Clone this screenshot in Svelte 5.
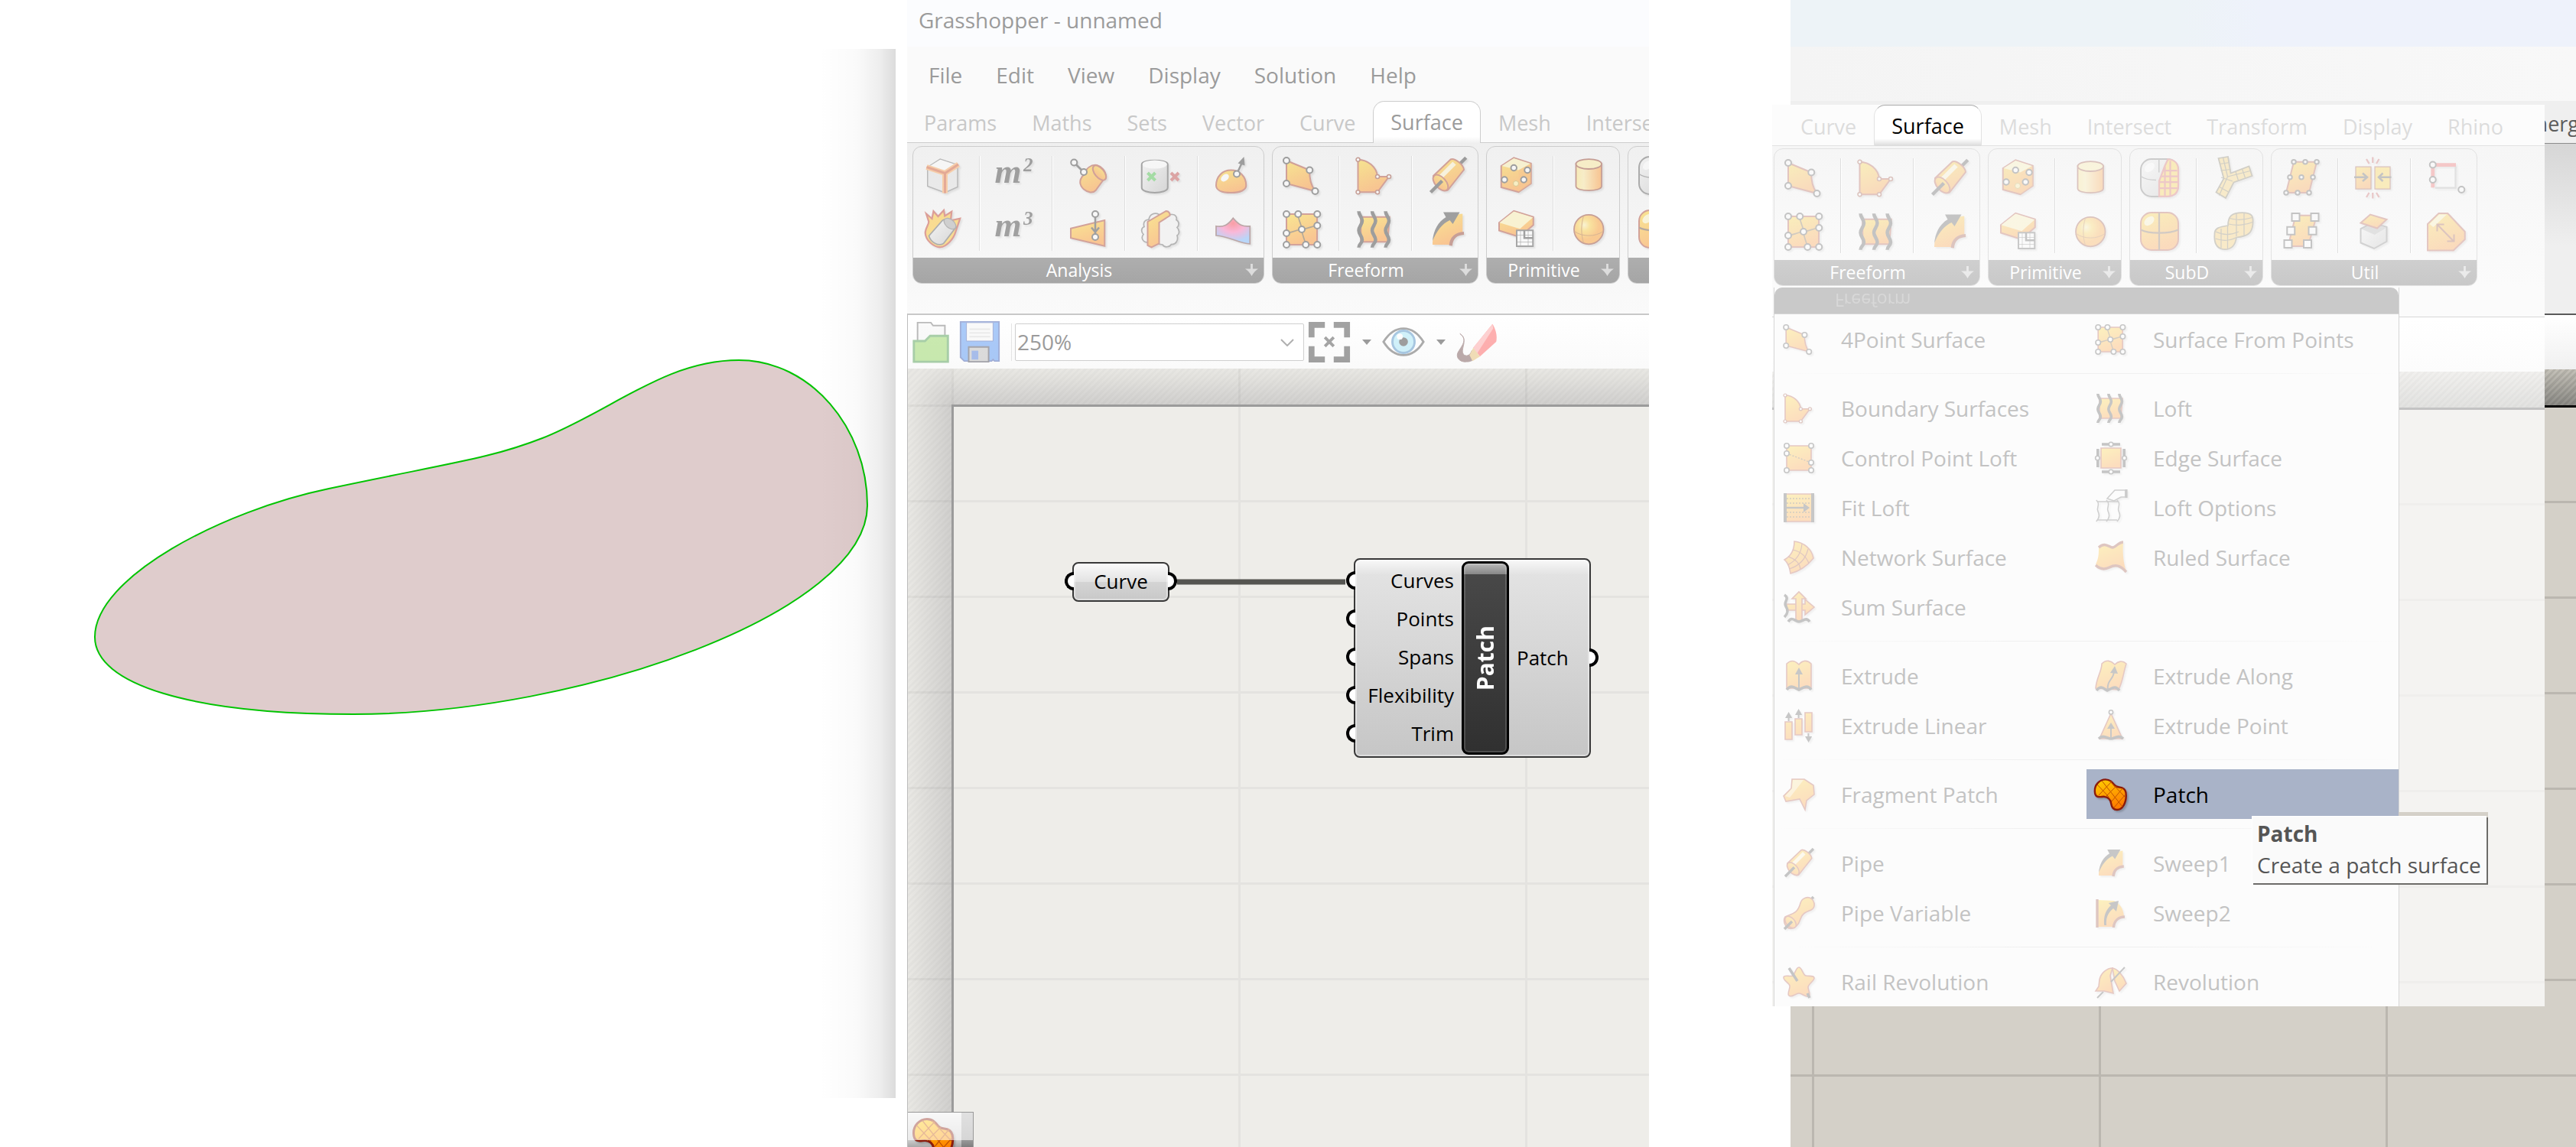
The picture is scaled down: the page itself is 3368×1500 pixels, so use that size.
<script lang="ts">
  interface Panel {
    name: string;
    icons: string[];
  }
  interface MenuItem {
    label: string;
    icon: string;
    tip?: string;
  }

  const node = (x: number, y: number, r = 1.6) =>
    `<circle class="node" cx="${x}" cy="${y}" r="${r}"/>`;
  const nodes = (list: number[][], r = 1.6) => list.map(([x, y]) => node(x, y, r)).join('');
  const square = (x: number, y: number) =>
    `<rect class="node" x="${x - 2}" y="${y - 2}" width="4" height="4"/>`;
  const wave = (x: number, y = 2.5) => `M${x} ${y}c0 2 1.8 3 1.8 5s-1.8 3-1.8 5 1.8 3 1.8 5-1.8 2-1.8 4`;

  // 24 x 24 glyphs
  const icons: Record<string, string> = {
    boxCorners: `<path fill="#ddd" stroke="#666" stroke-width=".6" d="M3.9 7.5l6.6-4.3 9.1 3v11.6L13 20.8l-9.1-3.4z"/><path fill="#fff" d="M4 7.5l6.5-4 9.2 3-6.7 4z"/><path class="glow" d="M3.4 7.4l9.6 3.2 7-4.6M13 10.6V21"/><path class="ember" d="M3.4 7.4l9.6 3.2 7-4.6M13 10.6V21"/>`,
    deconstruct: `<path class="hot" stroke-width=".9" d="M3.2 3.8l3 2.6.8-3.9 2.4 2.7 3-3.2.5 3 3.6-2.3-.5 4.6 4.9-1-2.4 7.2c-1 3.4-4.6 7.6-8 7.8-3.2 0-7.6-3.4-7.8-7.4 0-2.6 2-4.6 1.8-6z"/><path fill="url(#steel)" stroke="#444" stroke-width=".7" d="M4.6 15.4l7.2-8.2c2.6-1.4 6.4 1 7 3.6l-6.6 8.6c-2.6 1.6-6.6-.6-7.600-4z"/><ellipse cx="15.6" cy="9" rx="3.6" ry="2.2" transform="rotate(40 15.6 9)" fill="#999" stroke="#555" stroke-width=".5"/>`,
    area: `<text class="serif" x="1" y="15.6" font-size="18">m</text><text class="serif" x="16" y="9.4" font-size="10">2</text>`,
    volume: `<text class="serif" x="1" y="15.6" font-size="18">m</text><text class="serif" x="16" y="9.4" font-size="10">3</text>`,
    closest: `<path class="warm" d="M9.4 11.6c1.4-3.6 4-5.6 7-5.2 2.4.6 4.6 3 4.8 5.8l-5.4 7.4c-1.4 1.6-4 1.2-6.2-.6-2.2-2-2.8-4.6-.2-7.4z"/><ellipse class="warm" cx="17.8" cy="10.4" rx="4.6" ry="2.4" transform="rotate(50 17.8 10.4)"/><path class="ink" d="M4.5 5l5 5"/>${nodes([[4.5, 5], [9.6, 10]])}`,
    evaluate: `<path class="warm" d="M2.8 11.5l17.7-4.3v13.5L2.8 16.5z"/><path class="ink" d="M15.6 4v12M13.6 11l2 2.4 2-2.4"/>${nodes([[15.6, 4], [15.6, 16]])}`,
    inside: `<path fill="url(#steel)" stroke="#333" stroke-width=".8" d="M1.9 6v12.2c0 3.4 13.6 3.4 13.6 0V6c0-2.8-13.6-2.8-13.6 0z"/><ellipse cx="8.7" cy="6" rx="6.4" ry="2.2" fill="#fff"/><path stroke="#3b3" stroke-width="1.6" d="M5 10.4l4 4m0-4l-4 4"/><path stroke="#b33" stroke-width="1.6" d="M17.2 10.4l4 4m0-4l-4 4"/>`,
    brepShape: `<path fill="#eee" stroke="#555" stroke-width=".7" d="M5.2 18.8c-3 0-3.8-2.6-2.4-4.2-1.4-1.4-1.2-3.4.4-4-.8-2.2.6-4 2.4-3.6C6 4 8.6 3 11 4.2h7c1.8 0 2.4 1.8 2 2.8 1.6.8 1.6 3 .4 4 1.4 1.4 1.4 3.2 0 4.2.8 2.4-.6 4.8-3 4.6-1 1.6-3.6 1.8-4.6.2z"/><path class="warm" d="M5 8l9.6-5.6c1.6 0 2.2 1.4 2 2.4L11 8.4v11L7 21.4l-2-1z"/>`,
    principal: `<path class="warm" d="M2.8 17c0-4.6 3.2-8 7.8-8s7.9 3.4 7.9 8c0 2.4-3 3.8-7.9 3.8s-7.8-1.4-7.8-3.8z"/><ellipse cx="7.4" cy="13" rx="2.4" ry="1.6" transform="rotate(-40 7.4 13)" fill="#fff"/><path class="ink" d="M13.6 11l2.8-6"/><path fill="#222" d="M14.2 5.4l3.2-3.4.4 4.6z"/>${node(13.6, 11)}`,
    curvature: `<path fill="url(#heat)" stroke="#633" stroke-width=".7" d="M2.8 10.3c4 .6 6.2-.6 8.9-4.2 3 3.6 5 4.6 8.8 4.2v9.3c-6-.4-11-4-17.7-4.4z"/>`,
    point4: `<path class="warm" d="M3.6 4l12.1 5c-.2 4 .8 8 2.9 11l-15-4z"/>${nodes([[3.6, 4], [15.7, 9], [3.6, 16], [18.6, 20]])}`,
    points: `<path class="warm" d="M3.6 4h16v16h-16z"/><path class="thin" d="M9.7 4c0 4 1.6 4 1.9 8s1.6 5 2.1 8M3.6 14c3-.4 4-1.4 8-2s5-1.6 8-2"/>${nodes([[3.6, 4], [9.7, 4], [19.7, 4], [19.7, 10], [11.6, 12], [3.6, 14], [3.6, 20], [13.7, 20], [19.7, 20]])}`,
    boundary: `<path class="warm" d="M3 3.5c5 0 9.8 3.8 10.2 8.9h6l-6 8.1H3z"/><g class="rust">${nodes([[3, 3.5], [13.2, 12.4], [19.2, 12.4], [13.2, 20.5], [3, 20.5]], 1)}</g>`,
    loft: `<path class="warm" d="M4.5 5.5h15l-1 13h-14z"/><path class="heavy" d="${wave(3.4)}${wave(10.4)}${wave(17.4)}"/>`,
    pipe: `<path class="heavy" d="M18 6l3.5-3.5"/><path class="warm" d="M4.4 12l9-8.6c2-1 6.8 2.6 7 5.4L12 19.4c-2 1.6-8-2.8-7.6-7.4z"/><path stroke="#fff3c0" stroke-width="2.4" d="M8.4 12.4l7-7"/><ellipse class="warm" cx="8.2" cy="15.6" rx="5" ry="2.8" transform="rotate(48 8.2 15.6)"/><path class="heavy" d="M3 20.6l6-6"/>`,
    sweep1: `<path fill="url(#warm)" d="M4 20C4 12 9 5.500 15 4.500l4.700-.7V14c-3.600.6-6 3-6.200 6z"/><path fill="#222" d="M4 18C4.600 12 7 8 11 5.600L9.600 3h8.600l-3.600 6.200-1.600-2C9 9 6 13 4 18z"/><path class="rustline" d="M20.4 14c-4 .2-6.6 2.6-6.9 6.5"/>`,
    cheese: `<path class="warm" d="M3.9 6.8l6.6-4.3 9 3V16L13 20.500 3.900 18z"/><path fill="#fff0a0" d="M4.200 6.800l6.300-4 8.700 2.800L13 9z"/><path fill="#f80" opacity=".5" d="M13 9l6.500-3.500V16L13 20.500z"/>${nodes([[10.5, 7.8], [17.6, 9], [5.6, 14], [15.7, 14]], 1.5)}<circle cx="11.6" cy="16" r="1.4" fill="#ffe680" stroke="#a80" stroke-width=".4"/>`,
    plane: `<path class="warm" d="M2.8 8.5l7.7-6.2 10.2 3.2v4.200L13.500 16 2.800 12.600z"/><path fill="#fff0a0" d="M3 8.500l7.500-5.900 10 3.100-6.800 6z"/><path fill="#fff" stroke="#333" stroke-width=".8" d="M12 12.500h8.500v8.300H12z"/><path stroke="#333" stroke-width=".25" d="M14 12.500v8.300M18 12.500v8.300M12 15h8.500M12 18.600h8.500"/><path class="ink" d="M16 12.500v4h4.500"/>`,
    cylinder: `<path fill="url(#side)" stroke="#83200a" stroke-width=".7" d="M5 5.600v11.800c0 3 13.400 3 13.400 0V5.600z"/><ellipse cx="11.7" cy="5.8" rx="6.7" ry="2.6" fill="#ffe98a" stroke="#83200a" stroke-width=".7"/>`,
    sphere: `<circle cx="11.7" cy="12" r="7.7" fill="url(#ball)" stroke="#83200a" stroke-width=".7"/><path stroke="#a50" stroke-width=".4" d="M9 5c-1.400 4-1.400 10 0 14M4.200 13c4 3 11 3 15 0"/>`,
    subdMesh: `<rect x="2" y="2" width="19.6" height="19.6" rx="5.6" fill="url(#steel)" stroke="#444" stroke-width=".8"/><path stroke="#555" stroke-width=".6" d="M2 11c2 1.500 5 2 8 2M11.500 2v7"/><path fill="#ffc300" stroke="#c33" stroke-width=".9" d="M11.600 21.500v-8l3-8 1.600-3.400c3.600.2 5.400 2.400 5.400 5.600v8c0 4-2 5.800-5.600 5.800z"/><path stroke="#c33" stroke-width=".9" d="M14.600 6v15.500M17.400 3v18.500M12.600 11h9M11.600 14h10M11.600 17.200h10M14 8h7"/><ellipse cx="6.6" cy="6.4" rx="3" ry="2" transform="rotate(-40 6.6 6.4)" fill="#fff"/>`,
    subdBox: `<rect class="warm" x="2" y="2" width="19.6" height="19.6" rx="5.6"/><path stroke="#5a3a20" stroke-width=".9" d="M11.600 2v19.600M2 11c4 2.200 15 2.200 19.600 0"/><ellipse cx="6.4" cy="6.4" rx="3" ry="2" transform="rotate(-40 6.4 6.4)" fill="#fff3b0"/>`,
    multiPipe: `<path fill="#f5c23a" stroke="#5a5030" stroke-width=".7" d="M4.600 1.600l5-.8 1.400 8.600 9.600-3.600 1.600 5-9.600 3.400-4.200 8.200-5-3 4-7.200z"/><path stroke="#5a5030" stroke-width=".5" d="M5.200 4.600l5.200-.8M5.800 8l5.200-.6M6 11.600l6 2M13.600 8.600l1.400 4.600M17 7.200l1.600 4.600M5.200 16.600l4.600 2.600M7 1.200l2.400 10 11.800-3M9.400 11.200L5 21"/>`,
    fuse: `<path fill="#f5b830" stroke="#5a5030" stroke-width=".7" d="M2.600 13c0-2.600 2-3.600 7-4.200 0-5 2-6.800 7.400-6.800 5 0 6 1.600 5.600 6-.4 4.600-2.400 6.400-8.600 7-.6 4.400-3 6.600-7 6.200-3.600-.6-4.800-3.800-4.400-8.200z"/><path stroke="#5a5030" stroke-width=".5" d="M3 15.600c4 1.400 8 1 11-.6M3.200 12c4 2 8 1.800 12 0M10 8c4 1 9 .6 12.400-1M10.400 5c4 1.200 8 .8 11.800-.4M6 10.400v10M9.400 9v12M14 2.400v12M18 2.200v12"/>`,
    divide: `<path class="warm" d="M8 3.5h12L16 19.600H4z"/>${nodes([[8, 3.5], [14, 3.5], [20, 3.5], [6, 11.5], [12, 11.5], [18, 11.5], [4, 19.6], [10, 19.6], [16, 19.6]], 1.1)}`,
    isotrim: `<path class="warm" d="M9 3.5h11L15.500 19.600H5z"/>${[[9, 4.4], [19, 4.4], [6.5, 11.5], [17.8, 11.5], [5, 18.4], [15.2, 18.4]].map(([x, y]) => square(x, y)).join('')}`,
    flip: `<path fill="url(#warm)" stroke="#83200a" stroke-width=".5" d="M2.400 6h8v11.600h-8z"/><path fill="#ffc300" stroke="#83200a" stroke-width=".5" d="M12.400 6h8v11.600h-8z"/><path class="ink" d="M1.600 11.500h6.600M6 9.400l2.400 2.100L6 13.600M21 11.500h-6.600M16.600 9.400l-2.200 2.100 2.200 2.100"/><path stroke="#b33" stroke-width=".9" d="M11.300 1v3M8 2l1.400 2.400M14.600 2l-1.400 2.400M11.300 19.600v3M8 22l1.400-2.400M14.600 22l-1.400-2.400"/>`,
    copyTrim: `<path fill="url(#steel)" stroke="#555" stroke-width=".8" d="M5 10.500l6-3 7.600 2v7.600L12 20.800l-7-3z"/><path fill="#999" d="M5.500 10.600l6-2.600 6.800 2-6 3.600z"/><path class="warm" d="M5 7.400l5-4.400 8.600 2.600-5 4.600z"/>`,
    retrim: `<path stroke="#999" stroke-width=".9" d="M16.600 6v11H6"/><path stroke="#e33" stroke-width="1.9" d="M16.800 5H4.700v11.900"/>${nodes([[4.7, 5], [4.7, 12.8], [19.7, 18]])}`,
    untrim: `<path class="warm" d="M2 8l5.800-5.600h4.700l9 9.600v4l-6 5.800H2z"/><path fill="#fff0a0" d="M3 8l5-5h4L5 9.600z"/><path stroke="#83200a" stroke-width=".8" d="M7.400 8.600l8 8.200M7 11.800V8.200h3.600M15.800 13.400V17h-3.600"/>`,
    cpLoft: `<path class="warm" d="M4 4h16v16H4z"/><path class="thin" stroke-dasharray="1 1" d="M4 9l16 6"/>${nodes([[4, 4], [20, 4], [4, 9], [20, 15], [4, 20], [20, 20]])}`,
    edge: `<path class="warm" d="M5.500 5.500h13v13h-13z"/><path class="heavy" d="M6 3h12M6 21h12M3.400 6v12M20.600 6v12"/>${nodes([[12, 3], [12, 21], [3.2, 12], [20.8, 12]], 1.4)}`,
    fitLoft: `<path class="warm" d="M3 3h18v18H3z"/><path class="thin" stroke-dasharray="1 1" d="M4 6h16M4 9h16M4 15h16M4 18h16"/><path fill="none" stroke="#222" stroke-width="2" d="M3 2.500v19M21 2.500v19"/><path fill="none" stroke="#222" stroke-width="1.2" d="M4 12h12"/><path fill="#222" d="M15 9l4 3-4 3z"/>`,
    loftOptions: `<path stroke="#444" stroke-width=".8" d="M2.400 7c3 3 0 4.500 1 7s1.500 4-1 7M9 7c3 3 0 4.500 1 7s1.500 4-1 7M16 7c3 3 0 4.500 1 7s1.500 4-1 7M3 8h14M3 20h13"/><path fill="#fff" stroke="#444" stroke-width=".8" d="M9.500 6l5-5.500h7V5h-3L14 7.500z"/><path stroke="#333" stroke-width="1.6" d="M22 0v5.500"/>`,
    network: `<path class="warm" d="M9 1.500c6 .5 11.500 5 12.500 11-4.500 5.500-9 8.500-15 10-.5-4-1.500-7-4-9C7 11 9 7 9 1.500z"/><path stroke="#83200a" stroke-width=".6" d="M14 3c-.5 6-3.500 11-9.500 14M18 6.500c-1.500 6-5.500 11-12.500 13M8 7c5 1 9 4.500 10.500 9M5 11.500c4.500 1.500 7.500 4.500 8 8"/>`,
    ruled: `<path fill="url(#warm)" d="M4 5.500C8 2 11 5 13 5.500S17.500 3 20 2c-.5 7 0 13 2 19-4-4-7-4.500-10-3-4 2-7 .5-10-1.500 2-4 2-7 2-11z"/><path class="rustline" d="M4 5.500C8 1.500 11 5.500 13 5.500S17 2 20 2M2 17c3 3 6 3 9 1.500 4-2 7-1.500 11 3"/>`,
    sum: `<path class="warm" d="M4 10h12V7l6 5-6 5v-3H4z"/><path class="warm" d="M10 21V6.500H7.500L12 2l4.500 4.500H14V21z"/><path class="heavy" d="M2.500 4c4 2.500-1 4.500 1 7.500s1 5-1 7M5 21.500c2.500-4 4.500 0 7 0s4.500-3.500 7 0"/>`,
    extrude: `<path class="warm" d="M4 4c2.500-2.500 5-2.500 8 .5 2.500-3 5.500-3 8-.5v16H4z"/><path class="heavy" d="M4 21c3-4 5.500-1 8 0 2.500-1 5.500-4 8 0"/><path class="ink" stroke-width="1.5" d="M12 20v-9"/><path fill="#222" d="M9.500 11L12 6.500l2.500 4.500z"/>`,
    extrudeAlong: `<path class="warm" d="M6 4c3-3 6-2 8.500.5 2-2 5-3 7.500-.5-2 6-2 11-5 17L2 20c.5-7 4-11 4-16z"/><path class="heavy" d="M2.500 21.500c3-4 5-1 7 0 3-1 5-4 8 0"/><path class="ink" d="M10 21c-1-6 4-7 4-12"/><path fill="#222" d="M11.500 10l3-4.500 2 5z"/>`,
    extrudeLinear: `<path class="warm" d="M3 9.500h4.500V21H3zM9.500 7.500H14V18H9.500zM16 3.500h4.500V16H16z"/><path class="ink" d="M5.300 9V6M11.800 7V4M18.200 17v3"/><path fill="#222" d="M3 7l2.300-4L7.600 7zM9.500 5l2.300-4 2.300 4zM16 19l2.300 4 2.300-4z"/>`,
    extrudePoint: `<path class="warm" d="M12 4l7.500 16.500h-15z"/><path class="heavy" d="M4 20.500c3-3 5.500 0 8 0s5-3 8 0"/><path class="ink" d="M12 20v-6"/><path fill="#222" d="M9.500 14l2.500-4 2.500 4z"/>${node(12, 3.2, 1.3)}`,
    fragment: `<path class="warm" d="M7.500 2h8l6 4L22 12l-5 4-1 6-3.500-7-9 1.500L2 13l5-5z"/><path fill="#fff" opacity=".5" d="M8 2.500h7L6 14l-3-1 4.500-5z"/>`,
    patch: `<path fill="url(#warm)" stroke="#8a1c0c" stroke-width="1.2" d="M1.400 9.800c-.2-4.200 3.200-7.600 7-7.600 3.200 0 4.600 2 5.800 3.600 1.400 1.600 3.200 1.200 5 1.800 2 .8 2.800 2.600 2.700 5.200-.1 4.800-2.300 9.200-5.900 9.200-2.800 0-3.600-2-3.900-4-.4-2.600-2-4.400-4.600-4.600-2-.2-5.900 1.800-6.100-3.600z"/><path stroke="#c05000" stroke-width=".5" d="M3 5.500l7.500 8M6 3l13.500 17M11 3l10.500 11M4 12.500l8.500-9M8.500 13.500l7-7M12.500 16.500l7.500-9M14 20.500l7.500-8.500"/>`,
    pipeVar: `<path class="heavy" d="M19 4l2.500-2.500"/><path class="warm" d="M13 5.500c1-3.500 5-4.500 7-3 2.500 2 3 6 0 7.500-4 1.500-6 2.500-7 6s-4 7-7.500 6c-3-1.500-4-5-2.500-7.500 4-2 8-1.500 10-9z"/><ellipse class="warm" cx="6.5" cy="18" rx="4.5" ry="2.8" transform="rotate(48 6.5 18)"/><path class="heavy" d="M2.500 22.500l5-5"/>`,
    sweep2: `<path fill="url(#warm)" d="M3.500 3.500L14 4c4 2 6 5 6.500 10-4 .5-6.500 3-7 7h-10z"/><path class="rustline" d="M3 3v18.500M21 14.500c-4 0-7 2.500-7.300 7"/><path fill="#222" d="M7.600 20c-.6-6 1-10 4.400-13l-1.600-1.500L17 4l-1.500 7-2-2C10 12 8.600 15 9 20z"/>`,
    railRev: `<path class="warm" d="M12 2.500c2 0 2.500 5 4.500 5.500s5.500-.5 5.500 1.500-4 4-4 6 2 5 .5 6-4.500-2-6.500-2-5 3-6.500 1.500 1-4.500.5-6.500-4.500-3.500-4-5.500 4.500 0 6-1 2-5.500 4-5.500z"/><path class="heavy" d="M5.500 3l5.500 8.500M17.500 19.500l1.500 3"/>`,
    revolution: `<path class="ink" d="M3 22.500l4-4"/><path class="warm" d="M4.500 10.500C5.500 6 9.500 3 13 3l-1.500 5 2 11.500-6-1.500H2l2-3z"/><path class="warm" d="M13 3c3 .5 7 4.500 9 10l-4.500 5-3-6.500z"/><path class="ink" d="M12 12L21 2.500"/>`,
  };

  const freeform = { name: 'Freeform', icons: ['point4', 'boundary', 'pipe', 'points', 'loft', 'sweep1'] };
  const primitive = { name: 'Primitive', icons: ['cheese', 'cylinder', 'plane', 'sphere'] };
  const subd = { name: 'SubD', icons: ['subdMesh', 'multiPipe', 'subdBox', 'fuse'] };

  const mainPanels: Panel[] = [
    {
      name: 'Analysis',
      icons: ['boxCorners', 'area', 'closest', 'inside', 'principal', 'deconstruct', 'volume', 'evaluate', 'brepShape', 'curvature'],
    },
    freeform,
    primitive,
    subd,
  ];
  const popupPanels: Panel[] = [
    freeform,
    primitive,
    subd,
    { name: 'Util', icons: ['divide', 'flip', 'retrim', 'isotrim', 'copyTrim', 'untrim'] },
  ];

  const menus = ['File', 'Edit', 'View', 'Display', 'Solution', 'Help'];
  const mainTabs = ['Params', 'Maths', 'Sets', 'Vector', 'Curve', 'Surface', 'Mesh', 'Intersect'];
  const popupTabs = ['Curve', 'Surface', 'Mesh', 'Intersect', 'Transform', 'Display', 'Rhino'];

  // Groups fill two columns, left to right.
  const groups: (MenuItem | null)[][] = [
    [{ label: '4Point Surface', icon: 'point4' }, { label: 'Surface From Points', icon: 'points' }],
    [
      { label: 'Boundary Surfaces', icon: 'boundary' }, { label: 'Loft', icon: 'loft' },
      { label: 'Control Point Loft', icon: 'cpLoft' }, { label: 'Edge Surface', icon: 'edge' },
      { label: 'Fit Loft', icon: 'fitLoft' }, { label: 'Loft Options', icon: 'loftOptions' },
      { label: 'Network Surface', icon: 'network' }, { label: 'Ruled Surface', icon: 'ruled' },
      { label: 'Sum Surface', icon: 'sum' }, null,
    ],
    [
      { label: 'Extrude', icon: 'extrude' }, { label: 'Extrude Along', icon: 'extrudeAlong' },
      { label: 'Extrude Linear', icon: 'extrudeLinear' }, { label: 'Extrude Point', icon: 'extrudePoint' },
    ],
    [{ label: 'Fragment Patch', icon: 'fragment' }, { label: 'Patch', icon: 'patch', tip: 'Create a patch surface' }],
    [
      { label: 'Pipe', icon: 'pipe' }, { label: 'Sweep1', icon: 'sweep1' },
      { label: 'Pipe Variable', icon: 'pipeVar' }, { label: 'Sweep2', icon: 'sweep2' },
    ],
    [{ label: 'Rail Revolution', icon: 'railRev' }, { label: 'Revolution', icon: 'revolution' }],
  ];

  const inputs = ['Curves', 'Points', 'Spans', 'Flexibility', 'Trim'];

  let activeTab = $state('Surface');
  let hovered = $state('Patch');
  let zoom = $state('250%');
</script>

{#snippet icon(name: string)}
  <svg class="icon" viewBox="0 0 24 24" fill="none" aria-hidden="true">{@html icons[name]}</svg>
{/snippet}

{#snippet tabs(list: string[])}
  <div class="tabs" role="tablist">
    {#each list as tab (tab)}
      <button class="tab" class:active={tab === activeTab} role="tab" aria-selected={tab === activeTab} onclick={() => (activeTab = tab)}>
        {tab}
      </button>
    {/each}
  </div>
{/snippet}

{#snippet ribbon(panels: Panel[])}
  <div class="ribbon">
    {#each panels as panel (panel.name)}
      <section class="panel">
        <div class="tools" style="grid-template-columns: repeat({panel.icons.length / 2}, 64px)">
          {#each panel.icons as name (name)}
            <button class="tool" aria-label={name}>{@render icon(name)}</button>
          {/each}
        </div>
        <button class="band">
          <span>{panel.name}</span>
          <svg class="more" viewBox="0 0 18 18" aria-hidden="true"><path d="M7.500 0h3v7H18q-5 3-9 10-4-7-9-10h7.500z" /></svg>
        </button>
      </section>
    {/each}
  </div>
{/snippet}

<svg class="defs" aria-hidden="true">
  <defs>
    <linearGradient id="warm" x1="0" y1="0" x2=".4" y2="1"><stop offset="0" stop-color="#ffd000" /><stop offset="1" stop-color="#ff7d00" /></linearGradient>
    <linearGradient id="side"><stop offset="0" stop-color="#ffe060" /><stop offset=".3" stop-color="#ffe58a" /><stop offset="1" stop-color="#ff7d00" /></linearGradient>
    <radialGradient id="ball" cx=".35" cy=".35"><stop offset="0" stop-color="#fff0a0" /><stop offset=".4" stop-color="#ffc820" /><stop offset="1" stop-color="#ff8a00" /></radialGradient>
    <linearGradient id="steel" x1="0" y1="0" x2="1" y2="1"><stop offset="0" stop-color="#f4f4f4" /><stop offset="1" stop-color="#aaa" /></linearGradient>
    <radialGradient id="heat" cx=".5" cy=".2" r=".7"><stop offset="0" stop-color="#ff2030" /><stop offset=".5" stop-color="#ff60b0" /><stop offset="1" stop-color="#60a8ff" /></radialGradient>
    <linearGradient id="shade" x1="0" y1="0" x2="1" y2="0"><stop offset="0" stop-color="#000" stop-opacity="0" /><stop offset=".5" stop-color="#000" stop-opacity=".02" /><stop offset=".8" stop-color="#000" stop-opacity=".07" /><stop offset="1" stop-color="#000" stop-opacity=".14" /></linearGradient>
  </defs>
</svg>

<main class="page">
  <section class="viewport" aria-label="Patch preview">
    <svg viewBox="0 0 1186 1500">
      <path
        class="patch-shape"
        d="M966 471C1060 471 1134 560 1134 661C1134 800 760 934 462 934C250 934 124 895 124 833C124 755 290 668 430 639C590 605 640 600 709 573C800 537 870 471 966 471z"
      />
      <rect x="1070" y="64" width="101" height="1372" fill="url(#shade)" />
    </svg>
  </section>

  <section class="editor">
    <header class="title">Grasshopper - unnamed</header>
    <nav class="menubar">
      {#each menus as name (name)}
        <button>{name}</button>
      {/each}
    </nav>
    {@render tabs(mainTabs)}
    {@render ribbon(mainPanels)}

    <div class="toolbar">
      <button class="big" aria-label="Open">
        <svg viewBox="0 0 60 60" fill="none">
          <path fill="#f2f2f2" stroke="#555" stroke-width="2" d="M10 44V4h18l3 4h16v36z" />
          <path fill="#7ccc3c" stroke="#2c8a2c" stroke-width="3" d="M5 57V29h15l7-7h24v35z" />
        </svg>
      </button>
      <button class="big" aria-label="Save">
        <svg viewBox="0 0 60 60" fill="none">
          <path fill="#2f7df0" stroke="#1c3da0" stroke-width="2" d="M4 3h52v53h-6l-2-2-2 2H9l-5-5z" />
          <path fill="#f4f4f4" stroke="#1c3da0" d="M12 4h36v25H12z" />
          <path stroke="#ccc" stroke-width="2" d="M16 13h28M16 18h28M16 23h28" />
          <path fill="#aaa" stroke="#223" stroke-width="2" d="M15 37h27v20H15z" />
          <path fill="#2a60d0" d="M19 42h9v12h-9z" />
        </svg>
      </button>
      <label class="zoom">
        <select bind:value={zoom} aria-label="Zoom level">
          <option>250%</option>
          <option>100%</option>
        </select>
        <svg viewBox="0 0 18 10" aria-hidden="true"><path d="M1 1l8 8 8-8" /></svg>
      </label>
      <button class="big" aria-label="Zoom extents">
        <svg viewBox="0 0 60 60" fill="none">
          <path stroke="#1a1a1a" stroke-width="8" d="M6 24V7h18M36 7h18v17M54 36v18H36M24 54H6V36" />
          <path stroke="#222" stroke-width="4" d="M24 24l12 12M36 24L24 36" />
        </svg>
      </button>
      <span class="caret"></span>
      <button class="big" aria-label="Preview">
        <svg viewBox="0 0 60 60" fill="none">
          <path fill="#fff" stroke="#333" stroke-width="3" d="M3 30C18 6 42 6 57 30 42 54 18 54 3 30z" />
          <circle cx="30" cy="30" r="15" fill="#8fe0f5" stroke="#2a78b8" stroke-width="3" />
          <circle cx="30" cy="30" r="6" fill="#111" />
          <circle cx="25" cy="23" r="4" fill="#fff" />
        </svg>
      </button>
      <span class="caret"></span>
      <button class="big" aria-label="Sketch">
        <svg viewBox="0 0 60 60" fill="none">
          <path fill="#5a3030" stroke="#5a3030" stroke-width="1" d="M6 19c12 8 1 18-3 26-3 8 5 13 12 12 8 0 12-4 14-12l-7-3c-2 6-6 8-10 6-8-6 7-20-6-29z" />
          <path fill="#ff3c3c" d="M24 38L50 6c4 6 7 16 5 24L33 50z" />
          <path fill="#ff9090" d="M24 38L50 6l1 6-22 34z" />
          <path fill="#e0b050" d="M24 38l9 12-10 6-4-8z" />
        </svg>
      </button>
    </div>

    <div class="canvas">
      <div class="corner"></div>
      <div class="rail top"></div>
      <div class="rail left"></div>
      <div class="sheet"></div>

      <svg class="wire" width="220" height="8" aria-hidden="true"><path d="M0 4h220" /></svg>
      <div class="node param">
        <i class="grip in"></i>Curve<i class="grip out"></i>
      </div>
      <div class="node component">
        <ul class="ports">
          {#each inputs as name (name)}
            <li><i class="grip in"></i>{name}</li>
          {/each}
        </ul>
        <div class="nameplate"><span>Patch</span></div>
        <div class="result">Patch<i class="grip out"></i></div>
      </div>
      <div class="widget">{@render icon('patch')}</div>
    </div>
  </section>

  <section class="backdrop">
    <div class="bd-title"></div>
    <div class="bd-menu"></div>
    <div class="bd-tabs"><span>nerg</span></div>
    <div class="bd-ribbon"></div>
    <div class="bd-toolbar"></div>
    <div class="bd-hatch"></div>
    <div class="bd-sheet"></div>

    <div class="popup">
      {@render tabs(popupTabs)}
      {@render ribbon(popupPanels)}
      <div class="stack">
        <div class="behind">
          <div class="gap"></div>
          <div class="strip"></div>
          <div class="rail top"></div>
          <div class="sheet"></div>
        </div>
        <div class="dropdown">
          <div class="mirror"><span aria-hidden="true">Freeform</span></div>
          <div class="items" role="menu">
            {#each groups as group, g (g)}
              <div class="group">
                {#each group as item, i (i)}
                  {#if item}
                    <div class="slot">
                      <button
                        class="item"
                        class:hot={item.label === hovered}
                        role="menuitem"
                        onmouseenter={() => (hovered = item.label)}
                      >
                        {@render icon(item.icon)}
                        <span>{item.label}</span>
                      </button>
                      {#if item.tip && item.label === hovered}
                        <div class="tip" role="tooltip">
                          <div class="tip-body">
                            <strong>{item.label}</strong>
                            <span>{item.tip}</span>
                          </div>
                        </div>
                      {/if}
                    </div>
                  {/if}
                {/each}
              </div>
            {/each}
          </div>
        </div>
      </div>
    </div>
  </section>
</main>

<style>
  :global(body) {
    background: #fff;
  }
  button {
    padding: 0;
    border: 0;
    background: none;
    color: inherit;
    font: inherit;
    text-align: left;
  }
  .defs {
    position: absolute;
    width: 0;
    height: 0;
  }
  .page {
    display: grid;
    grid-template-columns: 1186fr 970fr 1212fr;
    min-height: 100vh;
    overflow: hidden;
    font-family: 'Open Sans', 'Noto Sans', sans-serif;
    font-size: 28px;
    line-height: 38px;
    white-space: nowrap;
  }

  .viewport svg {
    display: block;
    width: 100%;
  }
  .patch-shape {
    fill: #dfcccc;
    stroke: #00c400;
    stroke-width: 2;
  }

  /* icons */
  .icon {
    display: block;
    overflow: visible;
    opacity: var(--fade);
    filter: drop-shadow(2px 2px 1px rgba(0, 0, 0, 0.2));
  }
  .icon :global(.warm) {
    fill: url(#warm);
    stroke: #a02814;
    stroke-width: 0.8;
  }
  .icon :global(.hot) {
    fill: #ffb800;
    stroke: #b82010;
  }
  .icon :global(.node) {
    fill: #fff;
    stroke: #222;
    stroke-width: 0.8;
  }
  .icon :global(.rust .node) {
    stroke: #83200a;
    stroke-width: 0.6;
  }
  .icon :global(.ink) {
    stroke: #222;
    stroke-width: 1;
  }
  .icon :global(.thin) {
    stroke: #553a10;
    stroke-width: 0.7;
  }
  .icon :global(.heavy) {
    stroke: #1c1c1c;
    stroke-width: 1.8;
  }
  .icon :global(.rustline) {
    stroke: #83200a;
    stroke-width: 1.7;
  }
  .icon :global(.glow) {
    stroke: #ff9a40;
    stroke-width: 2.8;
  }
  .icon :global(.ember) {
    stroke: #d04010;
    stroke-width: 1.2;
  }
  .icon :global(.serif) {
    fill: #222;
    font-family: 'Liberation Serif', serif;
    font-style: italic;
    font-weight: bold;
  }

  /* main window */
  .editor {
    --fade: 0.4;
    --line: #cdcdcd;
    --band: linear-gradient(#aeaeae, #a5a5a5);
    display: flex;
    flex-direction: column;
    min-width: 0;
    overflow: hidden;
    background: #fafafa;
    color: #9b9b9b;
  }
  .title {
    height: 61px;
    padding: 7px 15px 0;
    box-sizing: border-box;
    background: #fbfcfe;
  }
  .menubar {
    display: flex;
    gap: 44px;
    height: 71px;
    padding: 2px 28px 0;
    box-sizing: border-box;
  }
  .tabs {
    display: flex;
    height: 55px;
    box-sizing: border-box;
    border-bottom: 1px solid var(--line);
    color: #c8c8c8;
    font-size: 27px;
  }
  .tab {
    padding: 4px 23px 0;
  }
  .tab.active {
    margin-bottom: -1px;
    padding: 0 22px;
    border: 1px solid var(--line);
    border-bottom: 0;
    border-radius: 15px 15px 0 0;
    background: linear-gradient(#fff 85%, #f0f0f0);
    color: #9b9b9b;
  }
  .editor .tabs {
    margin: 0 -1px;
  }
  .ribbon {
    display: flex;
    gap: 10px;
    padding: 4px 7px 39px;
    background: linear-gradient(#efefef, #fafafa);
  }
  .panel {
    flex: none;
    height: 180px;
    box-sizing: border-box;
    border: 1px solid var(--line);
    border-radius: 12px;
    overflow: hidden;
    background: linear-gradient(#f0f0f0, #f8f8f8);
  }
  .tools {
    display: grid;
    column-gap: 31px;
    row-gap: 10px;
    height: 145px;
    padding: 8px 7px 0;
    box-sizing: border-box;
    align-content: start;
    background: repeating-linear-gradient(90deg, transparent 0 86px, #dedede 86px 87px, #fff 87px 88px, transparent 88px 95px) 0 12px / 100% 124px no-repeat;
  }
  .tool {
    height: 60px;
  }
  .tool .icon {
    width: 60px;
    height: 60px;
    margin: 0 2px;
  }
  .band {
    display: flex;
    align-items: center;
    width: 100%;
    height: 34px;
    padding: 0 7px 2px 0;
    background: var(--band);
    color: #fff;
    font-size: 23px;
    line-height: 30px;
  }
  .band span {
    flex: 1;
    text-align: center;
  }
  .more {
    width: 17px;
    height: 17px;
    fill: #fff;
    opacity: 0.6;
  }

  .toolbar {
    display: flex;
    align-items: center;
    gap: 4px;
    height: 72px;
    padding: 0 3px;
    box-sizing: border-box;
    border-top: 2px solid #c8c8c8;
    border-left: 1px solid #bdbdbd;
    background: linear-gradient(#fff, #fafafa);
  }
  .big svg {
    display: block;
    width: 58px;
    height: 58px;
    opacity: 0.4;
  }
  .zoom {
    position: relative;
    display: block;
    margin-left: 8px;
    padding-left: 4px;
    border-left: 1px solid #e4e4e4;
  }
  .zoom select {
    display: block;
    width: 378px;
    height: 49px;
    padding: 0 2px;
    border: 1px solid #cfcfcf;
    border-radius: 2px;
    appearance: none;
    background: #fff;
    color: #9b9b9b;
    font: inherit;
  }
  .zoom svg {
    position: absolute;
    top: 20px;
    right: 13px;
    width: 18px;
    height: 10px;
    fill: none;
    stroke: #b0b0b0;
    stroke-width: 2;
  }
  .caret {
    margin: 0 9px 0 10px;
    border: 6px solid transparent;
    border-top: 7px solid #9b9b9b;
    border-bottom: 0;
  }

  /* canvas */
  .canvas {
    position: relative;
    flex: 1;
    display: grid;
    grid-template: 47px 1fr / 57px 1fr;
    overflow: hidden;
    border-left: 1px solid #bdbdbd;
    color: #000;
    font-size: 26px;
    line-height: 34px;
  }
  .corner,
  .rail {
    --hatch: repeating-linear-gradient(135deg, transparent 0 3px, rgba(0, 0, 0, 0.02) 3px 6px);
  }
  .corner {
    background: var(--hatch), radial-gradient(circle at bottom right, #d0cfcd, #e9e8e4 56px);
  }
  .rail.top {
    background:
      var(--hatch),
      linear-gradient(90deg, rgba(0, 0, 0, 0.04) 3px, transparent 3px) 0 0 / 375px 100%,
      linear-gradient(#e9e8e4, #d0cfcd);
  }
  .rail.left {
    background:
      var(--hatch),
      linear-gradient(rgba(0, 0, 0, 0.04) 3px, transparent 3px) 0 0 / 100% 125px,
      linear-gradient(90deg, #e9e8e4, #d0cfcd);
  }
  .sheet {
    border-top: 3px solid #9b9b9b;
    border-left: 3px solid #9b9b9b;
    background:
      linear-gradient(90deg, #e4e3e0 3px, transparent 3px) 0 0 / 375px 100%,
      linear-gradient(#e4e3e0 3px, transparent 3px) 0 0 / 100% 125px,
      #eeede9;
    background-origin: border-box;
  }
  .node {
    position: absolute;
    display: flex;
    box-sizing: border-box;
    border: 2px solid #383838;
    border-radius: 8px;
    background: linear-gradient(#f8f8f8, #e2e2e2 20px, #c6c6c6);
    box-shadow: inset 0 0 0 2px rgba(255, 255, 255, 0.4);
  }
  .param {
    left: 215px;
    top: 253px;
    width: 127px;
    height: 52px;
    align-items: center;
    justify-content: center;
    padding-bottom: 2px;
    background: linear-gradient(#fafafa, #e2e2e2 50%, #d4d4d4 50%, #c8c8c8);
  }
  .component {
    left: 583px;
    top: 248px;
    width: 310px;
    height: 261px;
  }
  .grip {
    position: absolute;
    width: 12px;
    height: 24px;
    box-sizing: border-box;
    border: 4px solid #000;
    background: #fff;
  }
  .grip.in {
    left: -12px;
    border-right: 0;
    border-radius: 12px 0 0 12px;
  }
  .grip.out {
    right: -12px;
    border-left: 0;
    border-radius: 0 12px 12px 0;
  }
  .ports {
    width: 139px;
    margin: 0;
    padding: 2px 10px 0 0;
    box-sizing: border-box;
    list-style: none;
    text-align: right;
  }
  .ports li {
    display: flex;
    align-items: center;
    justify-content: flex-end;
    height: 50px;
  }
  .nameplate {
    display: flex;
    align-items: center;
    justify-content: center;
    width: 62px;
    margin: 2px 0;
    box-sizing: border-box;
    border: 3px solid #000;
    border-radius: 9px;
    background: linear-gradient(#b8b8b8, #888 14px, #484848 14px, #303030);
    box-shadow: inset 0 0 0 2px rgba(255, 255, 255, 0.15);
    color: #fff;
    font-size: 30px;
    font-weight: 700;
  }
  .nameplate span {
    writing-mode: vertical-rl;
    transform: rotate(180deg);
  }
  .result {
    display: flex;
    align-items: center;
    padding: 0 0 2px 10px;
  }
  .wire {
    position: absolute;
    left: 352px;
    top: 275px;
  }
  .wire path {
    stroke: #555551;
    stroke-width: 7;
  }
  .widget {
    position: absolute;
    left: 0;
    bottom: 0;
    width: 86px;
    height: 46px;
    box-sizing: border-box;
    overflow: hidden;
    border: 1px solid #999;
    border-width: 1px 1px 0 0;
    background: linear-gradient(90deg, transparent 70px, rgba(0, 0, 0, 0.25) 70px), linear-gradient(#eee, #ccc 36px, #a8a8a8);
    --fade: 1;
  }
  .widget .icon {
    width: 60px;
    height: 60px;
    margin: 3px 4px;
  }
  .widget::after {
    content: '';
    position: absolute;
    inset: 0 0 9px;
    background: rgba(255, 255, 255, 0.6);
  }

  /* second window, under the popup */
  .backdrop {
    position: relative;
    display: flex;
    flex-direction: column;
    margin-left: 185px;
  }
  .bd-title {
    height: 61px;
    background: linear-gradient(90deg, #edf3f7 50%, #eef2fb 60%);
  }
  .bd-menu {
    height: 71px;
    background: linear-gradient(90deg, #f4f4f4, #f8f8f8);
  }
  .bd-tabs {
    display: flex;
    justify-content: flex-end;
    height: 56px;
    padding-top: 11px;
    box-sizing: border-box;
    overflow: hidden;
    border-bottom: 1px solid #8c8c8c;
    background: #efefef;
    color: #5c5c5c;
    font-size: 27px;
  }
  .bd-tabs span {
    margin-right: -4px;
  }
  .bd-ribbon {
    height: 222px;
    background: linear-gradient(#d6d6d6, #efefef 60%);
  }
  .bd-toolbar {
    height: 73px;
    box-sizing: border-box;
    border-top: 2px solid #5a5a5a;
    background: linear-gradient(#fff, #f0f0f0);
  }
  .bd-hatch {
    height: 47px;
    background: repeating-linear-gradient(135deg, transparent 0 3px, rgba(0, 0, 0, 0.08) 3px 6px), linear-gradient(#c4c1b8, #8c8b86);
  }
  .bd-sheet {
    flex: 1;
    border-top: 3px solid #000;
    background:
      linear-gradient(90deg, #bbb7b0 3px, transparent 3px) 28px 0 / 375px 100%,
      linear-gradient(#bbb7b0 3px, transparent 3px) 0 0 / 100% 125px,
      #d4d0c8;
    background-origin: border-box;
  }

  /* popup */
  .popup {
    --fade: 0.24;
    --line: #e2e2e2;
    --band: linear-gradient(#cfcfcf, #c8c8c8);
    position: absolute;
    top: 137px;
    left: -24px;
    right: 41px;
    background: #fcfcfc;
    color: #c3c3c3;
  }
  .popup .tabs {
    height: 54px;
    padding-left: 14px;
    color: #dcdcdc;
  }
  .popup .tab.active {
    background: linear-gradient(#fff 82%, #dadada);
    border-top-color: #aaa;
    color: #000;
  }
  .popup .ribbon {
    padding: 3px 2px 2px;
    background: linear-gradient(#f6f6f6, #fbfbfb);
  }
  .popup .panel {
    background: linear-gradient(#f6f6f6, #fbfbfb);
  }
  .stack {
    display: grid;
  }
  .stack > * {
    grid-area: 1 / 1;
  }
  .behind {
    display: flex;
    flex-direction: column;
  }
  .behind .gap {
    height: 38px;
    background: #fbfbfb;
  }
  .behind .strip {
    height: 72px;
    box-sizing: border-box;
    border-top: 1px solid #d8d8d8;
    background: linear-gradient(#fff, #fcfcfc);
  }
  .behind .rail {
    height: 47px;
    background: var(--hatch), linear-gradient(#f1f0ee, #e2e2e0);
  }
  .behind .sheet {
    flex: 1;
    border-left: 0;
    border-top-color: #c3c3c3;
    background: linear-gradient(#efeeec 3px, transparent 3px) 0 0 / 100% 125px, #f4f3f1;
    background-origin: border-box;
  }
  .dropdown {
    position: relative;
    width: 818px;
    margin-left: 2px;
    box-sizing: border-box;
    border: 1px solid #d6d6d6;
    border-width: 0 1px;
    background: #fcfcfc;
  }
  .mirror {
    height: 35px;
    padding-left: 79px;
    box-sizing: border-box;
    border-bottom: 1px solid #d6d6d6;
    border-radius: 10px 10px 0 0;
    background: #c9c9c9;
    color: #d8d8d8;
    font-size: 23px;
    line-height: 34px;
  }
  .mirror span {
    display: inline-block;
    transform: scaleY(-1);
  }
  .group {
    display: grid;
    grid-template-columns: 1fr 1fr;
  }
  .group + .group {
    padding-top: 25px;
    background: linear-gradient(90deg, transparent, #f0f0f0 40%, #f0f0f0 60%, transparent) 0 12px / 100% 1px no-repeat;
  }
  .slot {
    position: relative;
  }
  .item {
    display: flex;
    align-items: center;
    gap: 31px;
    width: 100%;
    height: 65px;
    padding-left: 8px;
  }
  .item .icon {
    width: 48px;
    height: 48px;
  }
  .item.hot {
    --fade: 1;
    background: #a9b3c8;
    color: #000;
  }
  .tip {
    position: absolute;
    z-index: 1;
    top: 56px;
    left: 216px;
    padding: 5px 2px 2px 0;
    background: linear-gradient(#d4d0c8, #d4d0c8) 192px 0 no-repeat;
  }
  .tip-body {
    display: flex;
    flex-direction: column;
    padding: 2px 6px;
    box-shadow: 2px 2px #6c6b68;
    border: 1px solid #fff;
    background: #fafafa;
    color: #555;
    line-height: 41px;
  }
</style>
